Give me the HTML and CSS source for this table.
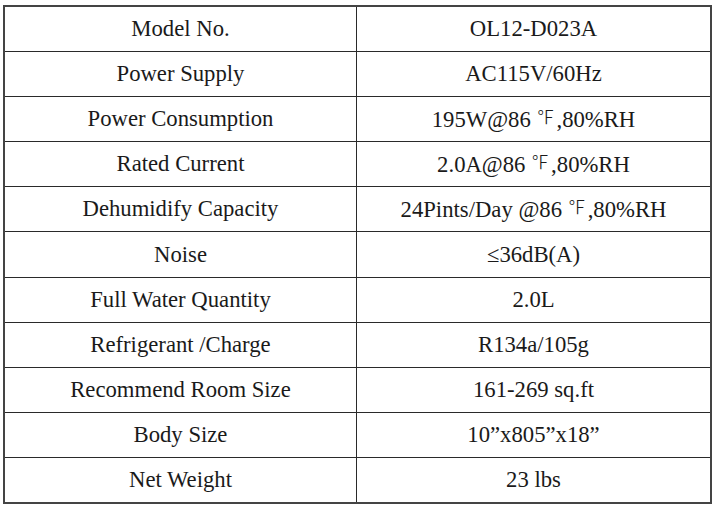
FILE: index.html
```html
<!DOCTYPE html>
<html>
<head>
<meta charset="utf-8">
<link rel="stylesheet" href="styles.css">
</head>
<body>
<table class="spec">
  <tr><td class="k">Model No.</td><td class="v">OL12-D023A</td></tr>
  <tr><td class="k">Power Supply</td><td class="v">AC115V/60Hz</td></tr>
  <tr><td class="k">Power Consumption</td><td class="v">195W@86 <span class="deg">℉</span>,80%RH</td></tr>
  <tr><td class="k">Rated Current</td><td class="v">2.0A@86 <span class="deg">℉</span>,80%RH</td></tr>
  <tr><td class="k">Dehumidify Capacity</td><td class="v">24Pints/Day @86 <span class="deg">℉</span>,80%RH</td></tr>
  <tr><td class="k">Noise</td><td class="v">≤36dB(A)</td></tr>
  <tr><td class="k">Full Water Quantity</td><td class="v">2.0L</td></tr>
  <tr><td class="k">Refrigerant /Charge</td><td class="v">R134a/105g</td></tr>
  <tr><td class="k">Recommend Room Size</td><td class="v">161-269 sq.ft</td></tr>
  <tr><td class="k">Body Size</td><td class="v">10”x805”x18”</td></tr>
  <tr><td class="k">Net Weight</td><td class="v">23 lbs</td></tr>
</table>
</body>
</html>
```

FILE: styles.css
```css
html, body {
  margin: 0;
  padding: 0;
  background: #fff;
}
body {
  padding: 5px 0 0 3px;
}
.spec {
  border-collapse: collapse;
  width: 709px;
  table-layout: fixed;
  font-family: "Liberation Serif", "Times New Roman", serif;
  font-size: 22.7px;
  color: #1a1a1a;
  border: 2px solid #444;
}
.spec td {
  border: 1px solid #2a2a2a;
  height: 44.1px;
  padding: 0;
  text-align: center;
  vertical-align: middle;
}
.spec td.k {
  width: 351px;
}
.deg {
  font-family: "Noto Sans CJK SC", sans-serif;
  font-weight: 300;
  font-size: 18px;
  margin-right: 2px;
  position: relative;
  top: -3px;
}
```
